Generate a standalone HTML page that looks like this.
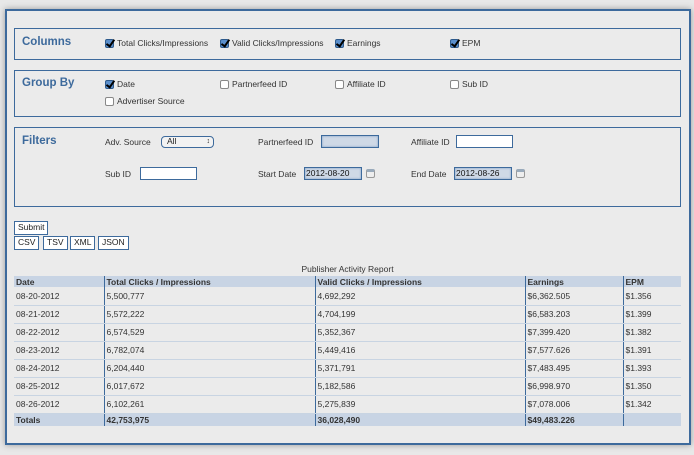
<!DOCTYPE html>
<html><head><style>
*{box-sizing:border-box;margin:0;padding:0}
body{width:694px;height:455px;background:#e8e8e8;font-family:"Liberation Sans",sans-serif;font-size:8.5px;color:#222;position:relative;overflow:hidden}
.a{position:absolute}
.outer{left:5px;top:9px;width:686px;height:436px;border:2px solid #3d6a9c;background:#ebebeb;box-shadow:0 0 6px #999}
.box{position:absolute;left:14px;width:667px;border:1.5px solid #3d6a9c}
.h{position:absolute;left:7px;font-weight:bold;font-size:11.5px;color:#3d6a9c}
.cb{position:absolute;font-size:8.5px;color:#333;white-space:nowrap}
.cb i{display:inline-block;width:9px;height:9px;border:1px solid #888;border-radius:2px;background:#fff;vertical-align:-2px;margin-right:3px;position:relative}
.cb i.c{background:#5b8fcc;border-color:#2d5a8c}
.cb i.c:after{content:"";position:absolute;left:2px;top:-2px;width:3px;height:7px;border:solid #000;border-width:0 2px 2px 0;transform:rotate(35deg)}
.lbl{position:absolute;font-size:8.5px;color:#333}
.inp{position:absolute;height:13px;border:1.5px solid #3d6a9c;background:#fff;font-size:8.5px;padding-left:1px;line-height:10px;color:#111}
.inp.f{background:#cfd9e6;box-shadow:inset 0 0 2px #7a9cc4}
.cal{position:absolute;width:9px;height:9px;border:1px solid #999;border-radius:2px;background:#eee;border-top:3px solid #9ab}
.btn{position:absolute;height:14px;border:1.5px solid #3d6a9c;background:#fff;font-size:8.5px;line-height:11px;padding:0 3px}
table{position:absolute;left:14px;top:276px;width:667px;border-collapse:collapse;font-size:8.5px;color:#333}
td{height:18px;border-bottom:1px solid #c8d4e2;padding-left:2px;border-left:1.5px solid #3d6a9c}
td:first-child{border-left:none}
tr.hd td{height:11px;background:#c8d4e4;font-weight:bold;border-bottom:none}
tr.tt td{height:13px;background:#c8d4e4;font-weight:bold;border-bottom:none}
</style></head><body>
<div class="a outer"></div>
<div class="box" style="top:28px;height:32px">
<div class="h" style="top:7px">Columns</div>
</div>
<div class="cb" style="left:105px;top:38px"><i class="c"></i>Total Clicks/Impressions</div>
<div class="cb" style="left:220px;top:38px"><i class="c"></i>Valid Clicks/Impressions</div>
<div class="cb" style="left:335px;top:38px"><i class="c"></i>Earnings</div>
<div class="cb" style="left:450px;top:38px"><i class="c"></i>EPM</div>

<div class="box" style="top:70px;height:47px">
<div class="h" style="top:6px">Group By</div>
</div>
<div class="cb" style="left:105px;top:79px"><i class="c"></i>Date</div>
<div class="cb" style="left:220px;top:79px"><i></i>Partnerfeed ID</div>
<div class="cb" style="left:335px;top:79px"><i></i>Affiliate ID</div>
<div class="cb" style="left:450px;top:79px"><i></i>Sub ID</div>
<div class="cb" style="left:105px;top:96px"><i></i>Advertiser Source</div>

<div class="box" style="top:127px;height:80px">
<div class="h" style="top:7px">Filters</div>
</div>
<div class="lbl" style="left:105px;top:137px">Adv. Source</div>
<div class="a" style="left:161px;top:136px;width:53px;height:12px;border:1.5px solid #3d6a9c;border-radius:4px;background:#f2f2f2;font-size:8.5px;padding-left:5px;line-height:9px">All<span style="position:absolute;right:3px;top:0;font-size:7px">&#8597;</span></div>
<div class="lbl" style="left:258px;top:137px">Partnerfeed ID</div>
<div class="inp f" style="left:321px;top:135px;width:58px"></div>
<div class="lbl" style="left:411px;top:137px">Affiliate ID</div>
<div class="inp" style="left:456px;top:135px;width:57px"></div>
<div class="lbl" style="left:105px;top:169px">Sub ID</div>
<div class="inp" style="left:140px;top:167px;width:57px"></div>
<div class="lbl" style="left:258px;top:169px">Start Date</div>
<div class="inp f" style="left:304px;top:167px;width:58px;line-height:11px">2012-08-20</div>
<div class="cal" style="left:366px;top:169px"></div>
<div class="lbl" style="left:411px;top:169px">End Date</div>
<div class="inp f" style="left:454px;top:167px;width:58px;line-height:11px">2012-08-26</div>
<div class="cal" style="left:516px;top:169px"></div>

<div class="btn" style="left:14px;top:221px">Submit</div>
<div class="btn" style="left:14px;top:236px">CSV</div>
<div class="btn" style="left:43px;top:236px">TSV</div>
<div class="btn" style="left:70px;top:236px">XML</div>
<div class="btn" style="left:98px;top:236px">JSON</div>

<div class="a" style="left:14px;width:667px;top:264px;text-align:center;font-size:8.5px;color:#333">Publisher Activity Report</div>
<table>
<colgroup><col style="width:90px"><col style="width:211px"><col style="width:210px"><col style="width:98px"><col></colgroup>
<tr class="hd"><td>Date</td><td>Total Clicks / Impressions</td><td>Valid Clicks / Impressions</td><td>Earnings</td><td>EPM</td></tr>
<tr><td>08-20-2012</td><td>5,500,777</td><td>4,692,292</td><td>$6,362.505</td><td>$1.356</td></tr>
<tr><td>08-21-2012</td><td>5,572,222</td><td>4,704,199</td><td>$6,583.203</td><td>$1.399</td></tr>
<tr><td>08-22-2012</td><td>6,574,529</td><td>5,352,367</td><td>$7,399.420</td><td>$1.382</td></tr>
<tr><td>08-23-2012</td><td>6,782,074</td><td>5,449,416</td><td>$7,577.626</td><td>$1.391</td></tr>
<tr><td>08-24-2012</td><td>6,204,440</td><td>5,371,791</td><td>$7,483.495</td><td>$1.393</td></tr>
<tr><td>08-25-2012</td><td>6,017,672</td><td>5,182,586</td><td>$6,998.970</td><td>$1.350</td></tr>
<tr><td>08-26-2012</td><td>6,102,261</td><td>5,275,839</td><td>$7,078.006</td><td>$1.342</td></tr>
<tr class="tt"><td>Totals</td><td>42,753,975</td><td>36,028,490</td><td>$49,483.226</td><td></td></tr>
</table>
</body></html>
